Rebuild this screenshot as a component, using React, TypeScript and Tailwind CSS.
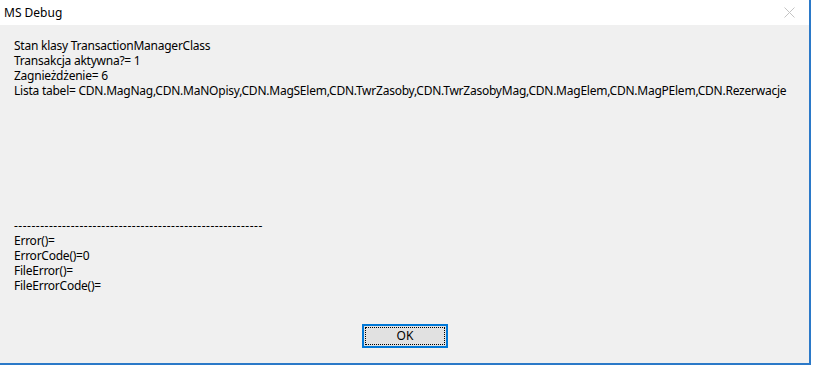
export default function App() {
  const dashes = "-".repeat(57);
  const lines = [
    "Stan klasy TransactionManagerClass",
    "Transakcja aktywna?= 1",
    "Zagnieżdżenie= 6",
    "Lista tabel= CDN.MagNag,CDN.MaNOpisy,CDN.MagSElem,CDN.TwrZasoby,CDN.TwrZasobyMag,CDN.MagElem,CDN.MagPElem,CDN.Rezerwacje",
  ];
  const lower = ["Error()=", "ErrorCode()=0", "FileError()=", "FileErrorCode()="];
  return (
    <div className="w-[815px] h-[366px] bg-white overflow-hidden" style={{ fontFamily: '"Noto Sans", sans-serif' }}>
      <div className="w-[811px] h-[365px] border-r-2 border-b-2 border-[#2b79c8] bg-[#f0f0f0] flex flex-col">
        <div className="h-[25px] bg-white flex items-center justify-between pl-[4px] pr-[10px]">
          <span className="text-[12px] text-black">MS Debug</span>
          <svg width="11" height="11" viewBox="0 0 11 11" className="mr-[4px]">
            <path d="M0.5 0.5 L10.5 10.5 M10.5 0.5 L0.5 10.5" stroke="#c4c4c4" strokeWidth="1" />
          </svg>
        </div>
        <div className="flex-1 flex flex-col">
          <div className="pl-[14px] pt-[13px] text-[12px] leading-[15px] text-black tracking-[-0.24px]">
            {lines.map((l, i) => (
              <div key={i} className="h-[15px] whitespace-pre">{l}</div>
            ))}
            <div className="h-[120px]" />
            <div className="h-[15px] whitespace-pre tracking-[0.5px]">{dashes}</div>
            {lower.map((l, i) => (
              <div key={i} className="h-[15px] whitespace-pre">{l}</div>
            ))}
          </div>
          <div className="flex-1" />
          <div className="flex justify-start pl-[362px] pb-[15px]">
            <div className="w-[86px] h-[24px] border-2 border-[#0078d7] bg-[#e1e1e1] p-[1px]">
              <div className="w-full h-full border border-dotted border-black flex items-center justify-center text-[12px] text-black">
                OK
              </div>
            </div>
          </div>
        </div>
      </div>
    </div>
  );
}
